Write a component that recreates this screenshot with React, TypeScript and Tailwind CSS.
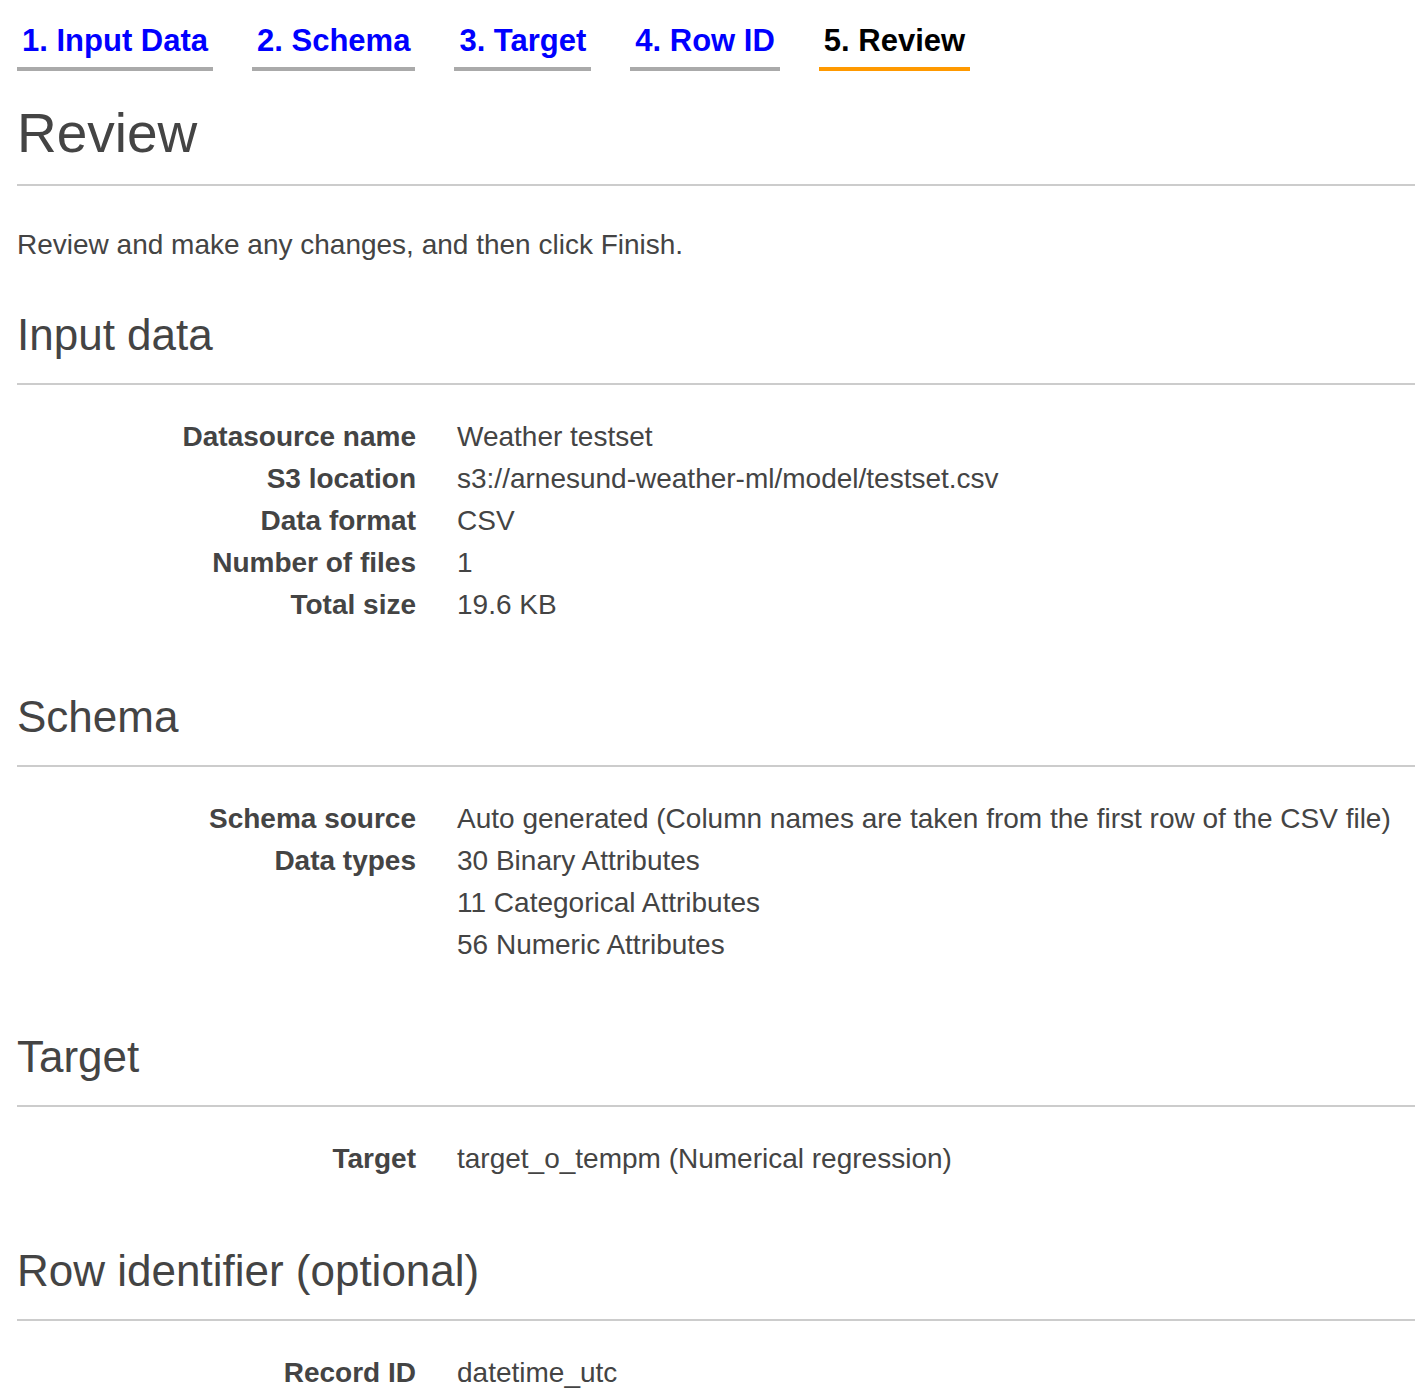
import React from 'react';

const tabs = [
  { label: '1. Input Data', active: false },
  { label: '2. Schema', active: false },
  { label: '3. Target', active: false },
  { label: '4. Row ID', active: false },
  { label: '5. Review', active: true },
];

type Row = { label: string; values: string[] };

const sections: { title: string; rows: Row[] }[] = [
  {
    title: 'Input data',
    rows: [
      { label: 'Datasource name', values: ['Weather testset'] },
      { label: 'S3 location', values: ['s3://arnesund-weather-ml/model/testset.csv'] },
      { label: 'Data format', values: ['CSV'] },
      { label: 'Number of files', values: ['1'] },
      { label: 'Total size', values: ['19.6 KB'] },
    ],
  },
  {
    title: 'Schema',
    rows: [
      {
        label: 'Schema source',
        values: ['Auto generated (Column names are taken from the first row of the CSV file)'],
      },
      {
        label: 'Data types',
        values: ['30 Binary Attributes', '11 Categorical Attributes', '56 Numeric Attributes'],
      },
    ],
  },
  {
    title: 'Target',
    rows: [{ label: 'Target', values: ['target_o_tempm (Numerical regression)'] }],
  },
  {
    title: 'Row identifier (optional)',
    rows: [{ label: 'Record ID', values: ['datetime_utc'] }],
  },
];

export default function App() {
  return (
    <div
      className="min-h-screen bg-white pl-[17px] text-[#444]"
      style={{ fontFamily: '"Liberation Sans", Arial, sans-serif' }}
    >
      {/* Wizard steps */}
      <nav className="flex gap-[39px] pt-[23px]">
        {tabs.map((t) => (
          <div
            key={t.label}
            className={
              t.active
                ? 'border-b-4 border-[#ff9900] px-[5px] pb-2 text-[31px] font-bold leading-[36px] text-black'
                : 'border-b-4 border-[#aaaaaa] px-[5px] pb-2 text-[31px] font-bold leading-[36px] text-[#0000ff]'
            }
          >
            {t.label}
          </div>
        ))}
      </nav>

      {/* Page title */}
      <h1 className="mt-[30px] pb-[19px] text-[55px] leading-[64px]">Review</h1>
      <div className="h-[2px] bg-[#cccccc]" />

      <p className="mt-[38px] text-[28px] leading-[42px]">
        Review and make any changes, and then click Finish.
      </p>

      <div className="mt-[45px] flex flex-col gap-[67px]">
        {sections.map((s) => (
          <section key={s.title}>
            <h2 className="pb-6 text-[44px] leading-[48px]">{s.title}</h2>
            <div className="h-[2px] bg-[#cccccc]" />
            <dl className="mt-[31px] grid grid-cols-[399px_1fr] gap-x-[41px] text-[28px] leading-[42px]">
              {s.rows.map((r) => (
                <React.Fragment key={r.label}>
                  <dt className="text-right font-bold">{r.label}</dt>
                  <dd>
                    {r.values.map((v) => (
                      <div key={v}>{v}</div>
                    ))}
                  </dd>
                </React.Fragment>
              ))}
            </dl>
          </section>
        ))}
      </div>
    </div>
  );
}
